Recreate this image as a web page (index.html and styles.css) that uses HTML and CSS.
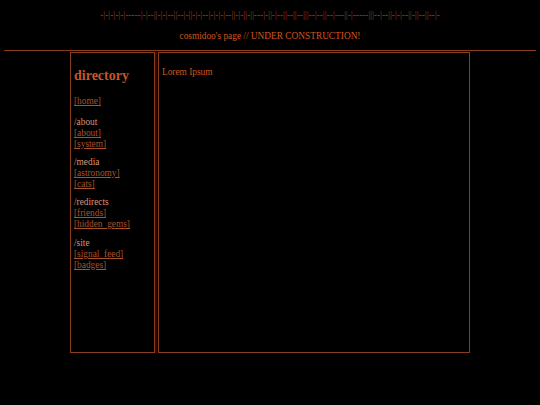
FILE: index.html
```html
<!DOCTYPE html>
<html>
<head>
<meta charset="utf-8">
<link rel="stylesheet" href="styles.css">
</head>
<body>
<div class="header">
  <div class="bars">-|-|-|-|-|-----|-|--||-|-|--||--|-||-|-|--|-|-|-|--||-|-||-||---|-||-|--||--||--|||--|--||--|---||-|-----|||--|--||-|-|--||-||--||--|-</div>
  <div class="title">cosmidoo's page // UNDER CONSTRUCTION!</div>
</div>
<hr class="rule">
<div class="layout">
  <nav class="sidebar">
    <h2 class="dir-title">directory</h2>
    <div class="section first"><a href="#">[home]</a></div>
    <div class="section">
      <div class="sec-head">/about</div>
      <a href="#">[about]</a>
      <a href="#">[system]</a>
    </div>
    <div class="section">
      <div class="sec-head">/media</div>
      <a href="#">[astronomy]</a>
      <a href="#">[cats]</a>
    </div>
    <div class="section">
      <div class="sec-head">/redirects</div>
      <a href="#">[friends]</a>
      <a href="#">[hidden_gems]</a>
    </div>
    <div class="section last">
      <div class="sec-head">/site</div>
      <a href="#">[signal_feed]</a>
      <a href="#">[badges]</a>
    </div>
  </nav>
  <main class="content">
    <p class="lorem">Lorem Ipsum</p>
  </main>
</div>
</body>
</html>
```
FILE: styles.css
```css
html, body {
  background: #000;
}
body {
  margin: 0;
  padding: 0 4px;
  font-family: "Liberation Serif", "Times New Roman", serif;
  font-size: 7pt;
  line-height: 11px;
  color: #d2561e;
}
.header {
  text-align: center;
}
.bars {
  margin-top: 10px;
  color: #9a3a18;
  white-space: nowrap;
}
.title {
  margin-top: 10px;
  color: #d2561e;
}
.rule {
  margin: 8px 0 0;
  border: 0;
  height: 1px;
  background: #8a3e1e;
}
.layout {
  display: flex;
  width: 400px;
  height: 301px;
  margin: 1px auto 0;
  gap: 3px;
}
.sidebar {
  width: 85px;
  box-sizing: border-box;
  border: 1px solid #8a3e1e;
  box-shadow: 2px 0 0 #2a1006;
  padding: 0 3px;
}
.dir-title {
  margin: 15px 0 0;
  font-size: 14px;
  line-height: 16px;
  font-weight: bold;
  color: #c8542a;
}
.section {
  margin-top: 7px;
}
.section.first {
  margin-top: 12px;
}
.section.first + .section {
  margin-top: 10px;
}
.section.last {
  margin-top: 8px;
}
.section a {
  display: block;
  color: #a8522c;
  text-decoration: underline;
}
.sec-head {
  color: #d8977a;
}
.content {
  flex: 1;
  box-sizing: border-box;
  border: 1px solid #8a3e1e;
  padding: 0 3px;
}
.lorem {
  margin: 14px 0 0;
  color: #d2561e;
}
```
